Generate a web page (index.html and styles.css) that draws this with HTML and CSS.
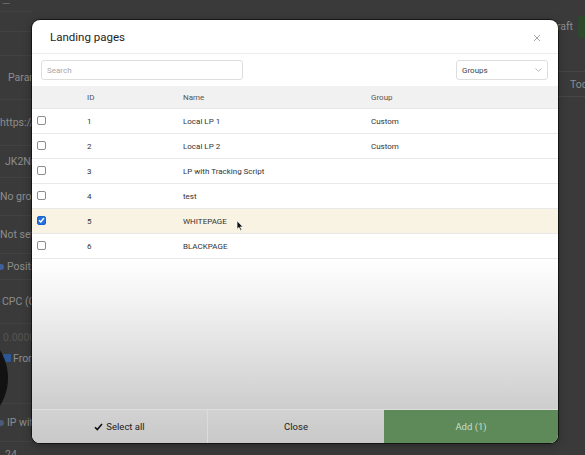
FILE: index.html
```html
<!DOCTYPE html>
<html lang="en">
<head>
<meta charset="utf-8">
<title>Landing pages</title>
<link rel="stylesheet" href="styles.css">
</head>
<body>
<div class="page">
  <div class="form">
    <div class="frow r-top"><span class="dash">—</span></div>
    <div class="frow r-gap1"></div>
    <div class="frow r-gap2"></div>
    <div class="frow r-param"><span class="in8">Param</span></div>
    <div class="frow r-url"><span>https://</span></div>
    <div class="frow r-key"><span class="in5">JK2Nn</span></div>
    <div class="frow r-group"><span>No grou</span></div>
    <div class="frow r-notset"><span>Not set</span></div>
    <div class="frow r-pos"><span class="dot"></span><span>Positio</span></div>
    <div class="frow r-cpc"><span class="in2">CPC (C</span></div>
    <div class="frow r-zero"><span class="in3 faint">0.0000</span></div>
    <div class="frow r-from"><span class="bgcheck"></span><span>From</span></div>
    <div class="frow r-gap3"></div>
    <div class="frow r-ip"><span class="dot dim"></span><span>IP with</span></div>
    <div class="frow r-hours"><span class="in5">24</span></div>
  </div>
  <div class="side">
    <div class="side-bar"><span>Draft</span><span class="side-btn"></span></div>
    <div class="side-tab">Today</div>
  </div>
  <div class="blob"></div>
</div>

<div class="modal">
  <div class="modal-head">
    <h1 class="modal-title">Landing pages</h1>
    <svg class="close-x" width="8" height="8" viewBox="0 0 8 8"><path d="M1 1L7 7M7 1L1 7" stroke="#a3a3a3" stroke-width="1"/></svg>
  </div>
  <div class="toolbar">
    <div class="search">Search</div>
    <div class="select"><span>Groups</span>
      <svg width="7" height="4" viewBox="0 0 7 4"><path d="M0.5 0.5L3.5 3.3L6.5 0.5" fill="none" stroke="#b0b0b0" stroke-width="0.9"/></svg>
    </div>
  </div>
  <div class="table">
    <div class="trow thead"><span></span><span>ID</span><span>Name</span><span>Group</span></div>
    <div class="trow"><span><i class="cb"></i></span><span>1</span><span>Local LP 1</span><span>Custom</span></div>
    <div class="trow"><span><i class="cb"></i></span><span>2</span><span>Local LP 2</span><span>Custom</span></div>
    <div class="trow"><span><i class="cb"></i></span><span>3</span><span>LP with Tracking Script</span><span></span></div>
    <div class="trow"><span><i class="cb"></i></span><span>4</span><span>test</span><span></span></div>
    <div class="trow selected"><span><i class="cb on"><svg width="7" height="6" viewBox="0 0 7 6"><path d="M1 3.2L2.8 5L6 1" fill="none" stroke="#fff" stroke-width="1.4"/></svg></i></span><span>5</span><span class="name-cell">WHITEPAGE<svg class="pointer" width="8" height="11" viewBox="0 0 8 11"><path d="M1 0.8V9.2L3 7.4L4.6 10.4L5.8 9.8L4.3 6.9H7Z" fill="#111" stroke="#fff" stroke-width="0.7"/></svg></span><span></span></div>
    <div class="trow"><span><i class="cb"></i></span><span>6</span><span>BLACKPAGE</span><span></span></div>
  </div>
  <div class="filler"></div>
  <div class="footer">
    <button class="fbtn"><svg width="9" height="8" viewBox="0 0 9 8"><path d="M1 4.2L3.3 6.6L8 1" fill="none" stroke="#111" stroke-width="1.6"/></svg>Select all</button>
    <button class="fbtn">Close</button>
    <button class="fbtn add">Add (1)</button>
  </div>
</div>
</body>
</html>
```
FILE: styles.css
```css
* { box-sizing: border-box; }

html, body {
  margin: 0;
  height: 100%;
}

body {
  background: #3a3a3a;
  font-family: Roboto, "Liberation Sans", sans-serif;
  overflow: hidden;
  position: relative;
}

/* dimmed page behind the dialog */
.page {
  display: flex;
  height: 455px;
  color: #8d8d8d;
  font-size: 10.5px;
}

.form {
  width: 32px;
  overflow: hidden;
  display: flex;
  flex-direction: column;
}

.frow {
  display: flex;
  align-items: center;
  gap: 3px;
  white-space: nowrap;
  border-bottom: 1px solid #424242;
  flex: none;
}

.r-top { height: 12px; align-items: flex-start; }
.r-gap1 { height: 20px; }
.r-gap2 { height: 24px; }
.r-param { height: 44px; }
.r-url { height: 46px; }
.r-key { height: 32px; }
.r-group { height: 38px; }
.r-notset { height: 38px; }
.r-pos { height: 26px; }
.r-cpc { height: 44px; }
.r-zero { height: 26px; border-bottom: none; }
.r-from { height: 16px; border-bottom: none; gap: 2px; padding-left: 3px; }
.r-gap3 { height: 38px; }
.r-ip { height: 38px; }
.r-hours { height: 20px; border-bottom: none; align-items: flex-start; padding-top: 6px; }

.dash { line-height: 8px; padding-left: 2px; color: #6e6e6e; }
.in8 { padding-left: 8px; }
.in5 { padding-left: 5px; }
.in3 { padding-left: 3px; }
.in2 { padding-left: 2px; }
.faint { color: #555; }

.dot {
  width: 6px;
  height: 6px;
  border-radius: 50%;
  background: #3d5f9c;
  margin-left: -2px;
  flex: none;
}
.dot.dim { background: #4a5a78; }

.bgcheck {
  width: 8px;
  height: 8px;
  border-radius: 1px;
  background: #2d5694;
  flex: none;
}

.side {
  margin-left: auto;
  width: 32px;
  display: flex;
  flex-direction: column;
}

.side-bar {
  height: 72px;
  display: flex;
  align-items: center;
  gap: 5px;
  padding-bottom: 18px;
  margin-left: -3px;
  white-space: nowrap;
  border-bottom: 1px solid #464646;
}

.side-btn {
  width: 24px;
  height: 22px;
  border-radius: 3px;
  background: #2c4a2b;
  flex: none;
}

.side-tab {
  height: 25px;
  padding-left: 17px;
  display: flex;
  align-items: center;
  white-space: nowrap;
  overflow: hidden;
  border-bottom: 1px solid #474747;
}

.blob {
  position: absolute;
  left: -88px;
  top: 328px;
  width: 96px;
  height: 100px;
  border-radius: 50%;
  background: #121212;
}

/* dialog */
.modal {
  position: absolute;
  left: 32px;
  top: 20px;
  width: 526px;
  height: 423px;
  border-radius: 8px;
  overflow: hidden;
  background: #fff;
  display: flex;
  flex-direction: column;
  box-shadow: 0 0 0 1px rgba(0, 0, 0, 0.55), 0 2px 8px rgba(0, 0, 0, 0.35);
  color: #333;
}

.modal-head {
  height: 34px;
  flex: none;
  display: flex;
  align-items: center;
  justify-content: space-between;
  padding: 0 17px 0 18px;
  border-bottom: 1px solid #ececec;
}

.modal-title {
  margin: 0;
  font-size: 11.5px;
  font-weight: 400;
  color: #1e1e1e;
}

.close-x { margin-top: 2px; }

.toolbar {
  height: 32px;
  flex: none;
  display: flex;
  align-items: center;
  justify-content: space-between;
  padding: 0 10px 0 9px;
}

.search, .select {
  height: 20px;
  border: 1px solid #dedede;
  border-radius: 3px;
  font-size: 8px;
  display: flex;
  align-items: center;
  padding-left: 5px;
}

.search {
  width: 202px;
  color: #a8a8a8;
}

.select {
  width: 92px;
  color: #444;
  justify-content: space-between;
  padding-right: 5px;
}

.table {
  flex: none;
  display: flex;
  flex-direction: column;
}

.trow {
  display: grid;
  grid-template-columns: 55px 96px 188px 1fr;
  align-items: center;
  height: 25px;
  border-bottom: 1px solid #e9e9e9;
  font-size: 8px;
  color: #333;
}

.trow.thead {
  height: 23px;
  background: #f1f1f1;
  color: #555;
}

.trow.selected { background: #f8f3e2; }

.cb {
  display: flex;
  align-items: center;
  justify-content: center;
  width: 9px;
  height: 9px;
  margin-left: 5px;
  margin-top: -2px;
  border: 1px solid #8d8d8d;
  border-radius: 2px;
  background: #fff;
}

.cb.on {
  border-color: #1c62c9;
  background: #2571dc;
}

.name-cell { position: relative; }

.pointer {
  position: absolute;
  left: 53px;
  top: 3px;
}

.filler {
  flex: 1;
  background: linear-gradient(#ffffff 0%, #f4f4f4 25%, #e2e2e2 60%, #cdcdcd 100%);
}

.footer {
  height: 34px;
  flex: none;
  display: grid;
  grid-template-columns: 175px 177px 1fr;
  border-top: 1px solid #dedede;
}

.fbtn {
  border: none;
  margin: 0;
  font-family: inherit;
  font-size: 9.5px;
  color: #222;
  background: linear-gradient(#d2d2d2, #c9c9c9);
  display: flex;
  align-items: center;
  justify-content: center;
  gap: 3px;
  padding: 0;
}

.fbtn + .fbtn { border-left: 1px solid #dcdcdc; }

.fbtn.add {
  background: #5d8a58;
  color: #cbddc8;
  border-left: none;
}
```
